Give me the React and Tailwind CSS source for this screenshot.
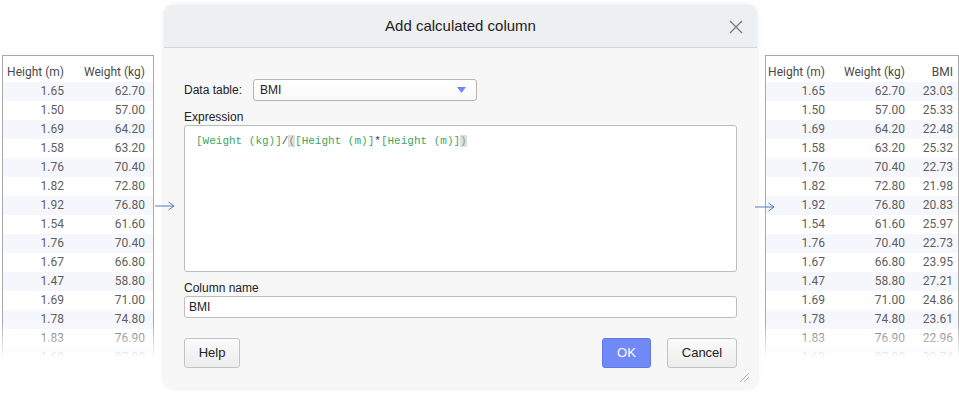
import React from 'react';

const leftRows = [
  ['1.65', '62.70'], ['1.50', '57.00'], ['1.69', '64.20'], ['1.58', '63.20'],
  ['1.76', '70.40'], ['1.82', '72.80'], ['1.92', '76.80'], ['1.54', '61.60'],
  ['1.76', '70.40'], ['1.67', '66.80'], ['1.47', '58.80'], ['1.69', '71.00'],
  ['1.78', '74.80'], ['1.83', '76.90'], ['1.69', '87.80'],
];

const bmi = ['23.03', '25.33', '22.48', '25.32', '22.73', '21.98', '20.83', '25.97', '22.73', '23.95', '27.21', '24.86', '23.61', '22.96', '30.74'];

const Arrow = ({ className }) => (
  <svg className={className} width="20" height="10" viewBox="0 0 20 10" fill="none">
    <path d="M0 5H19M13.5 1L19 5L13.5 9" stroke="#4a7dc4" strokeWidth="1" />
  </svg>
);

const DataTable = ({ width, cols, rows, headers }) => (
  <div className="relative shrink-0 mt-[55px] h-[303px] overflow-hidden" style={{ width }}>
    <div className="border border-[#a8a8a8] bg-white text-[12px] font-['Roboto',sans-serif] leading-[19px] text-[#5e5e5e]">
      <div className="flex pt-[7px] text-[#4a4a4a]">
        {headers.map((h, i) => (
          <div key={h} className="text-right pr-[2px] shrink-0" style={{ width: cols[i] }}>{h}</div>
        ))}
      </div>
      {rows.map((r, ri) => (
        <div key={ri} className={ri % 2 === 0 ? 'flex h-[19px] bg-[#f5f7fd]' : 'flex h-[19px]'}>
          {r.map((v, i) => (
            <div key={i} className="text-right pr-[2px] shrink-0" style={{ width: cols[i] }}>{v}</div>
          ))}
        </div>
      ))}
    </div>
    <div className="absolute inset-x-0 bottom-0 h-[36px] bg-gradient-to-b from-white/0 to-white" />
  </div>
);

const Btn = ({ children, className = '' }) => (
  <button className={`h-[30px] rounded-[3px] border border-[#c3c3c3] bg-gradient-to-b from-[#fbfbfb] to-[#ececec] text-[13px] text-[#222] ${className}`}>
    {children}
  </button>
);

export default function App() {
  return (
    <div className="relative w-[959px] h-[395px] bg-white flex items-start font-['Liberation_Sans',Arial,sans-serif] overflow-hidden">
      <div className="ml-[2px]">
        <DataTable width={152} cols={[63, 81]} rows={leftRows} headers={['Height (m)', 'Weight (kg)']} />
      </div>

      <div className="relative ml-[10px] mt-[5px] w-[593px] h-[383px] rounded-[9px] bg-[#f7f7f7] shadow-[0_0_5px_rgba(0,0,0,0.10)] flex flex-col overflow-hidden">
        <div className="h-[43px] shrink-0 bg-[#eeeff1] border-b border-[#d3d5d8] flex items-center justify-center relative">
          <span className="text-[15px] text-[#222]">Add calculated column</span>
          <svg className="absolute right-[14px] top-[15px]" width="14" height="14" viewBox="0 0 14 14">
            <path d="M1 1L13 13M13 1L1 13" stroke="#7a7a7a" strokeWidth="1.3" />
          </svg>
        </div>

        <div className="flex flex-col px-[20px] pt-[31px] text-[12px] text-[#222]">
          <div className="flex items-center h-[22px]">
            <span className="w-[69px]">Data table:</span>
            <div className="w-[224px] h-[22px] rounded-[3px] border border-[#b5b5b5] bg-gradient-to-b from-white to-[#f9f9f9] flex items-center justify-between pl-[6px] pr-[10px]">
              <span>BMI</span>
              <svg width="9" height="6" viewBox="0 0 9 6"><path d="M0 0H9L4.5 6Z" fill="#6f88f5" /></svg>
            </div>
          </div>

          <div className="mt-[9px] leading-[14px]">Expression</div>
          <div className="mt-px h-[147px] rounded-[3px] border border-[#bdbdbd] bg-white px-[11px] pt-[8px] font-['Liberation_Mono','Courier_New',monospace] text-[11px] leading-[14px] text-[#3fa660] whitespace-pre">
            <span>[Weight (kg)]</span>
            <span className="text-[#555]">/</span>
            <span className="bg-[#dedede] text-[#8a9a8e]">(</span>
            <span>[Height (m)]</span>
            <span className="text-[#333]">*</span>
            <span>[Height (m)]</span>
            <span className="bg-[#dedede] text-[#8a9a8e]">)</span>
          </div>

          <div className="mt-[9px] leading-[14px]">Column name</div>
          <div className="mt-px h-[22px] rounded-[3px] border border-[#bdbdbd] bg-white flex items-center pl-[4px]">BMI</div>

          <div className="mt-[20px] flex items-center">
            <Btn className="w-[56px]">Help</Btn>
            <button className="ml-auto w-[49px] h-[30px] rounded-[3px] border border-[#5f78e6] bg-[#7089f4] text-[13px] text-white">OK</button>
            <Btn className="ml-[16px] w-[70px]">Cancel</Btn>
          </div>
        </div>

        <svg className="absolute right-[7px] bottom-[5px]" width="12" height="12" viewBox="0 0 12 12">
          <path d="M2 11L11 2M6 11L11 6" stroke="#b0b0b0" strokeWidth="1" />
        </svg>
      </div>

      <div className="ml-[8px]">
        <DataTable width={194} cols={[61, 80, 48]} rows={leftRows.map((r, i) => [...r, bmi[i]])} headers={['Height (m)', 'Weight (kg)', 'BMI']} />
      </div>

      <Arrow className="absolute left-[155px] top-[201px]" />
      <Arrow className="absolute left-[755px] top-[202px]" />
    </div>
  );
}
